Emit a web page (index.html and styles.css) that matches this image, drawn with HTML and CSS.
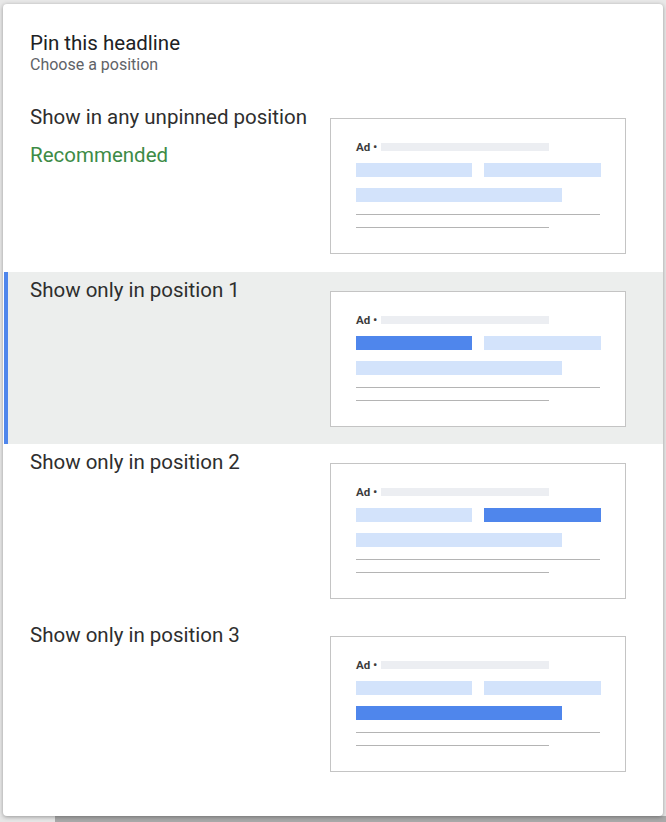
FILE: index.html
```html
<!DOCTYPE html>
<html lang="en">
<head>
<meta charset="utf-8">
<title>Pin this headline</title>
<link rel="stylesheet" href="styles.css">
</head>
<body>
<div class="dialog">
  <header class="head">
    <div class="title">Pin this headline</div>
    <div class="subtitle">Choose a position</div>
  </header>
  <div class="options">
    <div class="option">
      <div class="label">
        <div>Show in any unpinned position</div>
        <div class="rec">Recommended</div>
      </div>
      <div class="preview">
        <div class="adline"><span class="ad">Ad <span class="dot">•</span></span><span class="url"></span></div>
        <div class="hl"><span class="b b1"></span><span class="b b2"></span></div>
        <div class="hl"><span class="b b3"></span></div>
        <div class="ln ln1"></div>
        <div class="ln ln2"></div>
      </div>
    </div>
    <div class="option selected">
      <div class="label"><div>Show only in position 1</div></div>
      <div class="preview">
        <div class="adline"><span class="ad">Ad <span class="dot">•</span></span><span class="url"></span></div>
        <div class="hl"><span class="b b1 on"></span><span class="b b2"></span></div>
        <div class="hl"><span class="b b3"></span></div>
        <div class="ln ln1"></div>
        <div class="ln ln2"></div>
      </div>
    </div>
    <div class="option">
      <div class="label"><div>Show only in position 2</div></div>
      <div class="preview">
        <div class="adline"><span class="ad">Ad <span class="dot">•</span></span><span class="url"></span></div>
        <div class="hl"><span class="b b1"></span><span class="b b2 on"></span></div>
        <div class="hl"><span class="b b3"></span></div>
        <div class="ln ln1"></div>
        <div class="ln ln2"></div>
      </div>
    </div>
    <div class="option">
      <div class="label"><div>Show only in position 3</div></div>
      <div class="preview">
        <div class="adline"><span class="ad">Ad <span class="dot">•</span></span><span class="url"></span></div>
        <div class="hl"><span class="b b1"></span><span class="b b2"></span></div>
        <div class="hl"><span class="b b3 on"></span></div>
        <div class="ln ln1"></div>
        <div class="ln ln2"></div>
      </div>
    </div>
  </div>
</div>
</body>
</html>
```

FILE: styles.css
```css
html, body {
  margin: 0;
  padding: 0;
}
body {
  width: 666px;
  height: 822px;
  overflow: hidden;
  font-family: Roboto, "Liberation Sans", Arial, sans-serif;
  background:
    linear-gradient(to right, #e6e6e6 0, #e6e6e6 55px, #a9a9a9 55px) bottom / 100% 6px no-repeat,
    #e8e8e8;
}
.dialog {
  box-sizing: border-box;
  margin: 4px 0 0 3px;
  width: 660px;
  height: 812px;
  background: #ffffff;
  border-radius: 4px;
  box-shadow: 0 1px 4px rgba(0, 0, 0, 0.35);
}
.head {
  padding: 27px 0 0 27px;
}
.title {
  font-size: 20.5px;
  line-height: 24px;
  color: #202124;
}
.subtitle {
  font-size: 16px;
  line-height: 20px;
  color: #5f6368;
}
.options {
  margin-top: 24px;
}
.option {
  display: grid;
  grid-template-columns: 1fr 296px;
  height: 172.67px;
  box-sizing: border-box;
  padding: 0 37px 0 22px;
  border-left: 4px solid transparent;
  margin-left: 1px;
}
.option.selected {
  background: #eceeed;
  border-left-color: #4f86ec;
}
.label {
  padding-top: 6px;
  font-size: 20.5px;
  line-height: 24px;
  color: #2e2e2e;
}
.rec {
  margin-top: 14px;
  color: #3d8b46;
}
.preview {
  box-sizing: border-box;
  margin-top: 19px;
  height: 136px;
  border: 1px solid #c4c4c4;
  background: #ffffff;
  padding: 24px 0 0 25px;
}
.adline {
  display: flex;
  align-items: center;
  height: 8px;
}
.ad {
  font-size: 11.5px;
  font-weight: 700;
  color: #3c3c3c;
  width: 25px;
  white-space: nowrap;
  line-height: 8px;
}
.dot {
  font-size: 13px;
  font-weight: 400;
}
.url {
  width: 168px;
  height: 8px;
  background: #eceef2;
}
.hl {
  display: flex;
  gap: 12px;
  margin-top: 12px;
}
.hl + .hl {
  margin-top: 11px;
}
.b {
  height: 14px;
  background: #d3e3fb;
}
.b.on {
  background: #4f86ec;
}
.b1 { width: 116px; }
.b2 { width: 117px; }
.b3 { width: 206px; }
.ln {
  height: 1px;
  background: #b4b4b4;
}
.ln1 {
  width: 244px;
  margin-top: 12px;
}
.ln2 {
  width: 193px;
  margin-top: 12px;
}
```
